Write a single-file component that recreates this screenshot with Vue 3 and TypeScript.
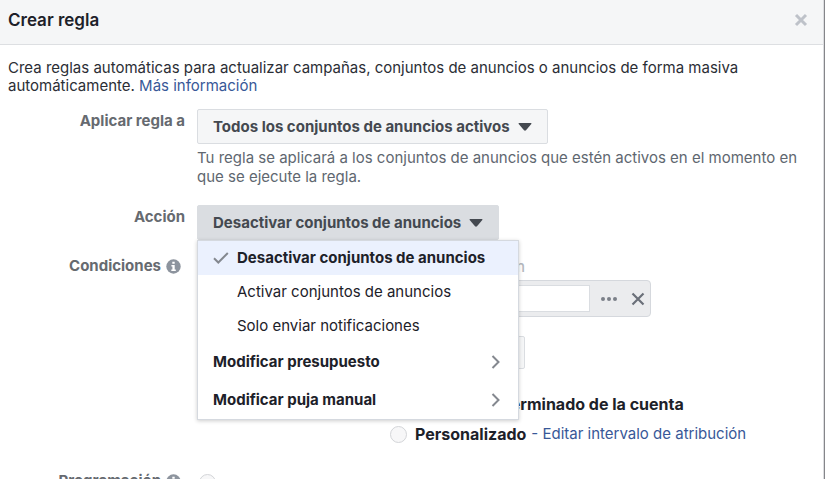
<script setup lang="ts">
import { ref } from 'vue'

interface Option {
  id: string
  label: string
}

const actions: Option[] = [
  { id: 'off', label: 'Desactivar conjuntos de anuncios' },
  { id: 'on', label: 'Activar conjuntos de anuncios' },
  { id: 'notify', label: 'Solo enviar notificaciones' },
]
const submenus: Option[] = [
  { id: 'budget', label: 'Modificar presupuesto' },
  { id: 'bid', label: 'Modificar puja manual' },
]

const selected = ref<Option>(actions[0])
const menuOpen = ref(true)
const conditionValue = ref('')

function choose(option: Option) {
  selected.value = option
  menuOpen.value = false
}
</script>

<template>
  <main class="backdrop">
    <section class="dialog" aria-labelledby="dialog-title">
      <header class="dialog-header">
        <h1 id="dialog-title">Crear regla</h1>
        <button class="icon-button close" type="button" aria-label="Cerrar">
          <svg width="14" height="14" viewBox="0 0 14 14">
            <path d="M2 2l10 10M12 2l-10 10" fill="none" stroke="#bec2c9" stroke-width="3" />
          </svg>
        </button>
      </header>

      <p class="intro">
        Crea reglas automáticas para actualizar campañas, conjuntos de anuncios o anuncios de forma masiva
        automáticamente. <a href="#">Más información</a>
      </p>

      <form class="form" @submit.prevent>
        <div class="row">
          <label class="row-label" for="scope">Aplicar regla a</label>
          <div class="field">
            <button id="scope" class="dropdown" type="button">
              Todos los conjuntos de anuncios activos
              <svg width="14" height="8" viewBox="0 0 14 8">
                <path d="M1.2 0h11.6q1.2 0 .5 1L8 7.3q-1 .9-2 0L.7 1Q0 0 1.2 0z" fill="#444950" />
              </svg>
            </button>
            <p class="hint">
              Tu regla se aplicará a los conjuntos de anuncios que estén activos en el momento en que se ejecute la
              regla.
            </p>
          </div>
        </div>

        <div class="row action-row">
          <label class="row-label" for="action">Acción</label>
          <div class="field menu-anchor">
            <button
              id="action"
              class="dropdown"
              :class="{ open: menuOpen }"
              type="button"
              :aria-expanded="menuOpen"
              @click="menuOpen = !menuOpen"
            >
              {{ selected.label }}
              <svg width="14" height="8" viewBox="0 0 14 8">
                <path d="M1.2 0h11.6q1.2 0 .5 1L8 7.3q-1 .9-2 0L.7 1Q0 0 1.2 0z" fill="#444950" />
              </svg>
            </button>
            <div v-if="menuOpen" class="menu" role="menu">
              <button
                v-for="option in actions"
                :key="option.id"
                class="menu-item"
                :class="{ selected: option.id === selected.id }"
                type="button"
                role="menuitem"
                @click="choose(option)"
              >
                <span class="check">
                  <svg v-if="option.id === selected.id" width="16" height="12" viewBox="0 0 16 12">
                    <path d="M1 6.2l4.3 4.3L14.8 1" fill="none" stroke="#84888f" stroke-width="2" />
                  </svg>
                </span>
                {{ option.label }}
              </button>
              <button v-for="option in submenus" :key="option.id" class="menu-item parent" type="button" role="menuitem">
                {{ option.label }}
                <svg width="10" height="14" viewBox="0 0 10 14">
                  <path d="M1.5 1l6 6-6 6" fill="none" stroke="#84888f" stroke-width="2" />
                </svg>
              </button>
            </div>
          </div>
        </div>

        <div class="row conditions-row">
          <label class="row-label" for="condition">
            Condiciones
            <svg class="info" width="15" height="15" viewBox="0 0 15 15">
              <circle cx="7.5" cy="7.5" r="7.2" fill="#8d949e" />
              <path d="M6.3 2.8h2.4v2H6.3zM5.4 6h3.3v4.6h1.1V12H5.3v-1.4h1.1V7.4h-1z" fill="#fff" />
            </svg>
          </label>
          <div class="field">
            <div class="column-title">Condición</div>
            <div class="condition">
              <input id="condition" v-model="conditionValue" type="text" />
              <button class="icon-button" type="button" aria-label="Más opciones">
                <svg width="18" height="6" viewBox="0 0 18 6">
                  <g fill="#7b8088">
                    <circle cx="3" cy="3" r="2" />
                    <circle cx="9" cy="3" r="2" />
                    <circle cx="15" cy="3" r="2" />
                  </g>
                </svg>
              </button>
              <button class="icon-button" type="button" aria-label="Eliminar">
                <svg width="14" height="14" viewBox="0 0 14 14">
                  <path d="M1.5 1.5l11 11M12.5 1.5l-11 11" fill="none" stroke="#6b7079" stroke-width="2.2" />
                </svg>
              </button>
            </div>
            <button class="range" type="button" aria-label="Intervalo"></button>
            <div class="attribution">
              <label class="choice">
                <input type="radio" name="attribution" />
                Valor predeterminado de la cuenta
              </label>
              <div class="choice-line">
                <label class="choice">
                  <input type="radio" name="attribution" />
                  Personalizado
                </label>
                <a href="#">- Editar intervalo de atribución</a>
              </div>
            </div>
          </div>
        </div>

        <div class="row schedule-row">
          <label class="row-label" for="schedule">
            Programación
            <svg class="info" width="15" height="15" viewBox="0 0 15 15">
              <circle cx="7.5" cy="7.5" r="7.2" fill="#8d949e" />
              <path d="M6.3 2.8h2.4v2H6.3zM5.4 6h3.3v4.6h1.1V12H5.3v-1.4h1.1V7.4h-1z" fill="#fff" />
            </svg>
          </label>
          <div class="field schedule">
            <input id="schedule" type="radio" name="schedule" checked />
          </div>
        </div>
      </form>
    </section>
  </main>
</template>

<style>
body {
  margin: 0;
  background: #fff;
}
</style>

<style scoped>
* {
  box-sizing: border-box;
}

.backdrop {
  height: 100vh;
  overflow: hidden;
  padding-right: 1px;
  background: #85868a;
  font-family: Inter, 'Liberation Sans', sans-serif;
  font-size: 15px;
  line-height: 18px;
  color: #1d2129;
}

.dialog {
  min-height: 100%;
  border-right: 1px solid #dcdde0;
  background: #fff;
}

.dialog-header {
  display: flex;
  align-items: center;
  justify-content: space-between;
  height: 45px;
  padding: 0 15px 4px 8px;
  border-bottom: 1px solid #dddfe2;
  background: #f5f6f7;
}

h1 {
  margin: 0;
  font-size: 17px;
  font-weight: 600;
  line-height: 20px;
}

button {
  font: inherit;
  color: inherit;
}

.icon-button {
  display: flex;
  padding: 0;
  border: 0;
  background: none;
}

a {
  color: #385898;
  text-decoration: none;
}

.intro {
  max-width: 756px;
  margin: 0;
  padding: 14px 8px 0;
  color: #2b2e35;
}

.form {
  padding-top: 14px;
}

.row {
  display: grid;
  grid-template-columns: 185px minmax(0, 1fr);
  column-gap: 12px;
}

.row-label {
  display: flex;
  align-items: center;
  justify-content: flex-end;
  gap: 5px;
  height: 24px;
  font-weight: 700;
  color: #666a70;
}

.info {
  margin-right: 4px;
}

.dropdown {
  display: flex;
  align-items: center;
  gap: 8px;
  height: 35px;
  padding: 0 15px;
  border: 1px solid #dadde1;
  border-radius: 2px;
  background: #f5f6f7;
  font-weight: 700;
  color: #444950;
}

.dropdown.open {
  background: #dadde1;
}

.hint {
  max-width: 610px;
  margin: 4px 0 0;
  line-height: 19px;
  color: #606770;
}

.action-row {
  padding-top: 19px;
}

.menu-anchor {
  position: relative;
}

.menu {
  position: absolute;
  z-index: 1;
  top: 35px;
  left: 0;
  width: 322px;
  border: 1px solid #d5d9df;
  background: #fff;
  box-shadow: 0 1px 4px rgba(0, 0, 0, 0.2);
}

.menu-item {
  display: flex;
  align-items: center;
  width: 100%;
  height: 34px;
  padding: 0 17px 0 15px;
  border: 0;
  background: none;
  text-align: left;
}

.menu-item.selected {
  background: #ebf1fe;
  font-weight: 700;
}

.menu-item.parent {
  justify-content: space-between;
  height: 38px;
  font-weight: 700;
}

.check {
  display: flex;
  width: 24px;
}

.conditions-row {
  padding-top: 14px;
}

.column-title {
  width: 328px;
  padding-top: 4px;
  font-weight: 500;
  text-align: right;
  color: #b4b8be;
}

.condition {
  display: flex;
  align-items: center;
  gap: 13px;
  width: 454px;
  height: 37px;
  margin-top: 4px;
  padding: 0 5px 0 6px;
  border: 1px solid #d5d8dd;
  border-radius: 4px;
  background: #ebecee;
}

.condition input {
  flex: 1;
  min-width: 0;
  height: 27px;
  border: 1px solid #dadde1;
  background: #fff;
  font: inherit;
}

.condition .icon-button:nth-of-type(1) {
  margin-left: -3px;
}

.range {
  display: block;
  width: 328px;
  height: 33px;
  margin-top: 19px;
  border: 1px solid #dadde1;
  border-radius: 2px;
  background: #f5f6f7;
}

.attribution {
  display: grid;
  gap: 6px;
  margin: 23px 0 0 193px;
  line-height: 24px;
}

.choice {
  display: flex;
  align-items: center;
  gap: 8px;
  font-size: 16px;
  font-weight: 700;
}

.choice-line {
  display: flex;
  align-items: center;
  gap: 5px;
}

input[type='radio'] {
  appearance: none;
  flex: none;
  width: 17px;
  height: 17px;
  margin: 0;
  border: 1px solid #d3d5d8;
  border-radius: 50%;
  background: #f7f7f8;
}

input[type='radio']:checked {
  background: radial-gradient(circle, #777b80 3px, #f7f7f8 4px);
}

.schedule-row {
  padding-top: 23px;
}

.schedule {
  padding: 5px 0 0 2px;
}
</style>
